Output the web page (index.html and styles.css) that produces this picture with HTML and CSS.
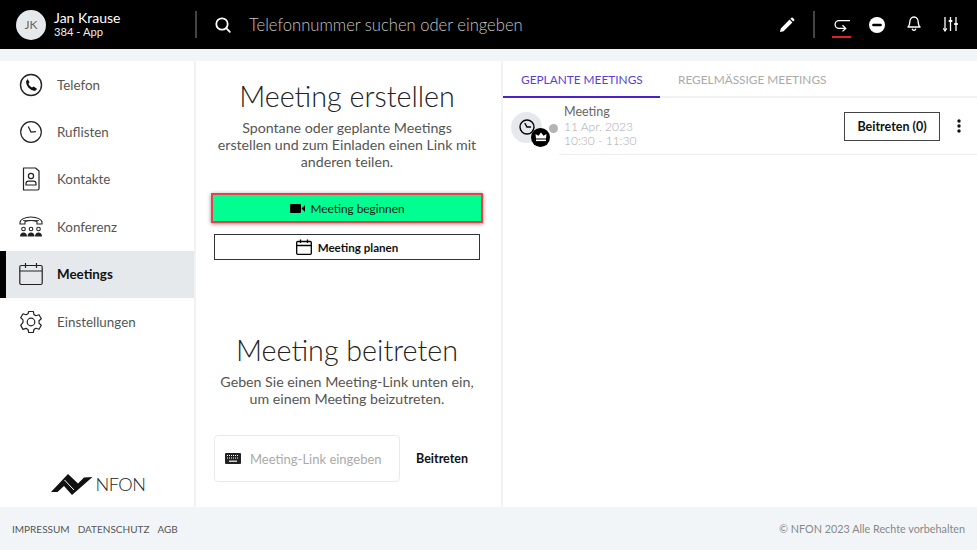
FILE: index.html
```html
<!DOCTYPE html>
<html lang="de">
<head>
<meta charset="utf-8">
<title>Meetings</title>
<link rel="stylesheet" href="styles.css">
</head>
<body>
<div class="app">
  <header class="top">
    <div class="user">
      <div class="avatar">JK</div>
      <div class="user-text">
        <div class="user-name">Jan Krause</div>
        <div class="user-ext">384 - App</div>
      </div>
    </div>
    <div class="search">
      <svg class="search-icon" width="18" height="18" viewBox="0 0 18 18" fill="none" stroke="#fff" stroke-width="1.8"><circle cx="8" cy="8" r="5.7"/><path d="M12.2 12.2l3.6 3.6" stroke-linecap="round"/></svg>
      <span class="search-text">Telefonnummer suchen oder eingeben</span>
    </div>
    <div class="actions">
      <svg class="act-pen" width="16" height="16" viewBox="0 0 16 16"><path d="M1 15l.8-3.6L10.6 2.6l2.8 2.8-8.8 8.8zM11.4 1.8l1-1a1 1 0 0 1 1.3 0l1.5 1.5a1 1 0 0 1 0 1.3l-1 1z" fill="#fff"/></svg>
      <div class="act-div"></div>
      <div class="act-forward">
        <svg width="18" height="13" viewBox="0 0 18 13" fill="none" stroke="#fff" stroke-width="1.3"><path d="M17 1.600H6a3.900 3.900 0 0 0 0 7.800h6"/><path d="M9.500 6.200l3.200 3.200-3.200 3"/></svg>
        <div class="act-red"></div>
      </div>
      <svg class="act-dnd" width="16" height="16" viewBox="0 0 16 16"><circle cx="8" cy="8" r="8" fill="#fff"/><rect x="3.200" y="6.700" width="9.600" height="2.600" rx="1" fill="#000"/></svg>
      <svg class="act-bell" width="14" height="15" viewBox="0 0 14 15" fill="none" stroke="#fff" stroke-width="1.400"><path d="M1 11c1.200-1 1.700-2 1.700-4.200C2.700 3.600 4.400 1 7 1s4.300 2.600 4.300 5.800c0 2.200.5 3.200 1.700 4.200z" stroke-linejoin="round"/><path d="M5.400 13.200a1.700 1.700 0 0 0 3.200 0" stroke-linecap="round"/></svg>
      <svg class="act-sliders" width="15" height="16" viewBox="0 0 15 16" fill="none" stroke="#fff" stroke-width="1.300"><path d="M2 1v14M7.500 1v14M13 1v14"/><path d="M.2 12.300L2 15l1.800-2.700" stroke-width="1.200"/><path d="M5.700 5h3.600M11.200 8h3.600" stroke-width="2.200"/></svg>
    </div>
  </header>
  <div class="strip"></div>
  <div class="main">
    <nav class="side">
      <a class="nav-item">
        <svg width="24" height="24" viewBox="0 0 24 24" fill="none" stroke="#222" stroke-width="1.400"><circle cx="12" cy="12" r="10.500"/><path d="M8.300 5.800l2 3c.2.300.1.600-.1.900l-.8 1.100c.6 1.500 2 3 3.600 3.700l1.200-.8c.3-.2.600-.2.900 0l2.800 2c-.5 1.600-1.800 2.400-3.100 2-3.900-1-6.900-4.200-7.600-7.800-.3-1.700.6-3.300 2.100-4.100z" fill="#111" stroke="none"/></svg>
        <span>Telefon</span>
      </a>
      <a class="nav-item">
        <svg width="24" height="24" viewBox="0 0 24 24" fill="none" stroke="#222" stroke-width="1.200"><circle cx="12" cy="12" r="10.300"/><path d="M9.500 7l2.500 5 4.500-.3" stroke-linecap="round"/></svg>
        <span>Ruflisten</span>
      </a>
      <a class="nav-item">
        <svg width="24" height="24" viewBox="0 0 24 24" fill="none" stroke="#222" stroke-width="1.200"><path d="M4.500 1h12l3.500 3v17.500a1.500 1.500 0 0 1-1.500 1.500h-14z" stroke-linejoin="round"/><circle cx="12" cy="9" r="2.600"/><path d="M7 18v-1.500c0-1.500 1.300-2.300 2.500-2.300h5c1.200 0 2.500.8 2.500 2.300V18z"/></svg>
        <span>Kontakte</span>
      </a>
      <a class="nav-item">
        <svg width="24" height="24" viewBox="0 0 24 24" fill="none" stroke="#222" stroke-width="1.100"><path d="M1 7.500C1 4.500 6 2 12 2s11 2.500 11 5.500v1.500h-5V6.500C16 6 14 5.500 12 5.500S8 6 6 6.500V9H1z"/><path d="M4 5.500h16" stroke-width=".8"/><circle cx="4.500" cy="14" r="1.800"/><circle cx="12" cy="14" r="1.800"/><circle cx="19.500" cy="14" r="1.800"/><path d="M1 21.500c0-2.500 1.500-4 3.500-4s3.500 1.500 3.500 4zM8.500 21.500c0-2.500 1.500-4 3.500-4s3.500 1.500 3.500 4zM16 21.500c0-2.500 1.500-4 3.500-4s3.500 1.500 3.500 4z" fill="#222" stroke="none"/></svg>
        <span>Konferenz</span>
      </a>
      <a class="nav-item nav-active">
        <svg width="24" height="24" viewBox="0 0 24 24" fill="none" stroke="#222" stroke-width="1.200"><rect x=".8" y="3.500" width="22.400" height="19" rx="1.500"/><path d="M.8 9h22.400M6.500 1v5M17.500 1v5"/></svg>
        <span>Meetings</span>
      </a>
      <a class="nav-item">
        <svg width="24" height="24" viewBox="0 0 24 24" fill="none" stroke="#222" stroke-width="1.200"><circle cx="12" cy="12" r="3.800"/><path d="M9.700 1.500h4.600l.7 3.100 2 1.100 3-1 2.300 4-2.300 2.100v2.400l2.300 2.100-2.300 4-3-1-2 1.100-.7 3.100H9.700L9 19.500l-2-1.100-3 1-2.300-4L4 12.300V9.900L1.700 7.800 4 3.800l3 1 2-1.100z" stroke-linejoin="round"/></svg>
        <span>Einstellungen</span>
      </a>
      <div class="logo">
        <svg width="42" height="21" viewBox="0 0 42 21"><path d="M0 18L17 0l10 9.500 6-6L41.500 3 21 21l-8-9-6.500 6z" fill="#111"/><path d="M13.500 6l9.500 10" stroke="#fff" stroke-width="1"/></svg>
        <span class="logo-text">NFON</span>
      </div>
    </nav>
    <section class="center">
      <div class="block-create">
        <h1 class="title">Meeting erstellen</h1>
        <p class="desc">Spontane oder geplante Meetings<br>erstellen und zum Einladen einen Link mit<br>anderen teilen.</p>
      </div>
      <button class="btn-start">
        <svg width="15" height="9" viewBox="0 0 15 9"><rect width="11" height="9" rx="1" fill="#000"/><path d="M11.500 4.500L15 1v7z" fill="#000"/></svg>
        <span>Meeting beginnen</span>
      </button>
      <button class="btn-plan">
        <svg width="16" height="16" viewBox="0 0 16 16" fill="none" stroke="#000" stroke-width="1.300"><rect x=".7" y="2.500" width="14.600" height="12.800" rx="1"/><path d="M.7 6.500h14.600M4.500 .5v3.500M11.500 .5v3.500"/></svg>
        <span>Meeting planen</span>
      </button>
      <h1 class="title title-join">Meeting beitreten</h1>
      <p class="desc desc-join">Geben Sie einen Meeting-Link unten ein,<br>um einem Meeting beizutreten.</p>
      <div class="join-row">
        <div class="join-input">
          <svg width="16" height="11" viewBox="0 0 16 11"><rect width="16" height="11" rx="1" fill="#222"/><path d="M2 2.500h12M2 5h12" stroke="#fff" stroke-width="1" stroke-dasharray="1 1"/><path d="M4 8.200h8" stroke="#fff" stroke-width="1.200"/></svg>
          <span>Meeting-Link eingeben</span>
        </div>
        <span class="join-btn">Beitreten</span>
      </div>
    </section>
    <section class="right">
      <div class="tabs">
        <div class="tab tab-active">GEPLANTE MEETINGS</div>
        <div class="tab">REGELMÄSSIGE MEETINGS</div>
      </div>
      <div class="meeting">
        <div class="m-icon">
          <svg width="16" height="16" viewBox="0 0 16 16" fill="none" stroke="#000" stroke-width="1.400"><circle cx="8" cy="8" r="7"/><path d="M6 4.500L8 8l3.500 0" stroke-linecap="round"/></svg>
          <div class="m-crown">
            <svg width="12" height="10" viewBox="0 0 12 10"><path d="M1 6.500L.5 2l3 1.800L6 .5l2.500 3.300L11.500 2 11 6.500z" fill="#fff"/><rect x="1" y="7.500" width="10" height="1.600" fill="#fff"/></svg>
          </div>
        </div>
        <div class="m-dot"></div>
        <div class="m-body">
          <div class="m-text">
            <div class="m-name">Meeting</div>
            <div class="m-meta">11 Apr. 2023</div>
            <div class="m-meta">10:30 - 11:30</div>
          </div>
          <button class="btn-join">Beitreten (0)</button>
          <svg class="m-more" width="4" height="14" viewBox="0 0 4 14"><circle cx="2" cy="2" r="1.700" fill="#111"/><circle cx="2" cy="7" r="1.700" fill="#111"/><circle cx="2" cy="12" r="1.700" fill="#111"/></svg>
        </div>
      </div>
    </section>
  </div>
  <footer class="foot">
    <div class="foot-links"><span>IMPRESSUM</span><span>DATENSCHUTZ</span><span>AGB</span></div>
    <div class="foot-copy">© NFON 2023 Alle Rechte vorbehalten</div>
  </footer>
</div>
</body>
</html>
```
FILE: styles.css
```css
* { box-sizing: border-box; }
html, body { margin: 0; height: 100%; }
body { font-family: "Lato", "Open Sans", sans-serif; color: #555; background: #f1f5f8; overflow: hidden; }
.app { width: 977px; height: 550px; display: flex; flex-direction: column; }

.top { height: 49px; background: #000; display: flex; align-items: center; color: #fff; flex: none; }
.user { width: 195px; display: flex; align-items: center; padding-left: 16px; gap: 8px; flex: none; }
.avatar { width: 30px; height: 30px; border-radius: 50%; background: #e6e9ec; color: #666; font-size: 12px; display: flex; align-items: center; justify-content: center; }
.user-text { line-height: 13.500px; }
.user-name { font-size: 14px; color: #fff; }
.user-ext { font-size: 11.200px; color: #eee; }
.search { flex: 1; height: 27px; border-left: 2px solid #444; display: flex; align-items: center; padding-left: 17px; gap: 17px; }
.search-text { font-size: 16.600px; color: #c4c4c4; font-weight: 300; }
.actions { display: flex; align-items: center; padding-right: 19px; }
.act-div { width: 2px; height: 27px; background: #444; margin: 0 17px 0 18px; }
.act-forward { display: flex; flex-direction: column; align-items: center; gap: 4px; width: 19px; padding-top: 7px; }
.act-red { width: 19px; height: 2px; background: #e0212c; }
.act-dnd { margin-left: 18px; }
.act-bell { margin-left: 22px; margin-top: -3px; }
.act-sliders { margin-left: 22px; margin-top: -1px; }

.strip { height: 12px; flex: none; }
.main { flex: 1; display: flex; background: #fff; min-height: 0; }

.side { width: 196px; border-right: 2px solid #f0f2f4; display: flex; flex-direction: column; flex: none; }
.nav-item { height: 47.400px; display: flex; align-items: center; gap: 14px; padding-left: 19px; font-size: 13.400px; color: #555; }
.nav-item svg { flex: none; }
.nav-active { background: #e6e9ec; border-left: 6px solid #000; padding-left: 13px; color: #111; font-weight: 700; }
.logo { margin-top: auto; display: flex; align-items: center; justify-content: center; gap: 3px; padding: 0 0 12px 2px; }
.logo-text { font-size: 18.200px; color: #222; font-weight: 300; letter-spacing: -.5px; }

.center { width: 307px; border-right: 2px solid #f0f2f4; display: flex; flex-direction: column; align-items: center; padding: 16px 21px 0 18px; flex: none; }
.block-create { display: flex; flex-direction: column; align-items: center; }
.title { margin: 0; font-size: 28.700px; font-weight: 300; color: #222; line-height: 38px; }
.desc { margin: 4px 0 0; font-size: 14.200px; line-height: 17px; text-align: center; color: #555; white-space: nowrap; }
.btn-start { width: 272px; height: 30px; margin-top: 23px; background: #00ff90; border: 2px solid #e8404a; box-shadow: 0 1px 4px rgba(0,0,0,.45); display: flex; align-items: center; justify-content: center; gap: 6px; font: 11.800px "Lato", sans-serif; color: #111; padding: 0; }
.btn-plan { width: 266px; height: 26px; margin-top: 11px; background: #fff; border: 1px solid #333; display: flex; align-items: center; justify-content: center; gap: 6px; font: 700 11.600px "Lato", sans-serif; color: #111; padding: 0; }
.title-join { margin-top: 71px; }
.desc-join { margin-top: 4px; }
.join-row { width: 266px; display: flex; align-items: center; margin-top: 28px; }
.join-input { width: 186px; height: 47px; border: 1px solid #e8eaec; border-radius: 4px; display: flex; align-items: center; padding-left: 10px; gap: 9px; font-size: 13px; color: #aaa; }
.join-btn { margin-left: 16px; font-size: 12.500px; font-weight: 700; color: #111; }

.right { flex: 1; display: flex; flex-direction: column; min-width: 0; }
.tabs { height: 37px; display: flex; border-bottom: 2px solid #f0f2f4; font-size: 11.850px; flex: none; }
.tab { padding: 0 18px; line-height: 37px; color: #aaa; height: 37px; }
.tab-active { color: #5a3fd8; border-bottom: 2px solid #4a22c8; width: 157px; white-space: nowrap; }
.meeting { display: flex; align-items: center; padding-left: 8px; height: 57px; flex: none; }
.m-icon { width: 31px; height: 31px; border-radius: 50%; background: #e6e9ec; display: flex; align-items: center; justify-content: center; position: relative; margin-top: 1px; flex: none; }
.m-crown { position: absolute; right: -8px; bottom: -4px; width: 19px; height: 19px; border-radius: 50%; background: #000; display: flex; align-items: center; justify-content: center; }
.m-dot { width: 9px; height: 9px; border-radius: 50%; background: #b3b3b3; margin: 4px 0 0 7px; flex: none; }
.m-body { flex: 1; display: flex; align-items: center; height: 57px; margin-left: 1px; border-bottom: 1px solid #eceef0; padding-right: 16px; }
.m-text { flex: 1; padding-left: 5px; line-height: 14.500px; font-size: 12.500px; padding-top: 2px; }
.m-name { color: #666; }
.m-meta { color: #aaa; font-weight: 300; font-size: 12px; }
.btn-join { width: 96px; height: 29px; background: #fff; border: 1px solid #444; font: 700 12.500px "Lato", sans-serif; color: #111; padding: 0; margin-right: 1px; }
.m-more { margin-left: 16px; }

.foot { height: 43px; flex: none; display: flex; align-items: center; justify-content: space-between; padding: 0 12px; font-size: 10px; color: #555; background: #f1f5f8; }
.foot-links { display: flex; gap: 8px; }
.foot-copy { color: #888; font-size: 10.800px; }
```
